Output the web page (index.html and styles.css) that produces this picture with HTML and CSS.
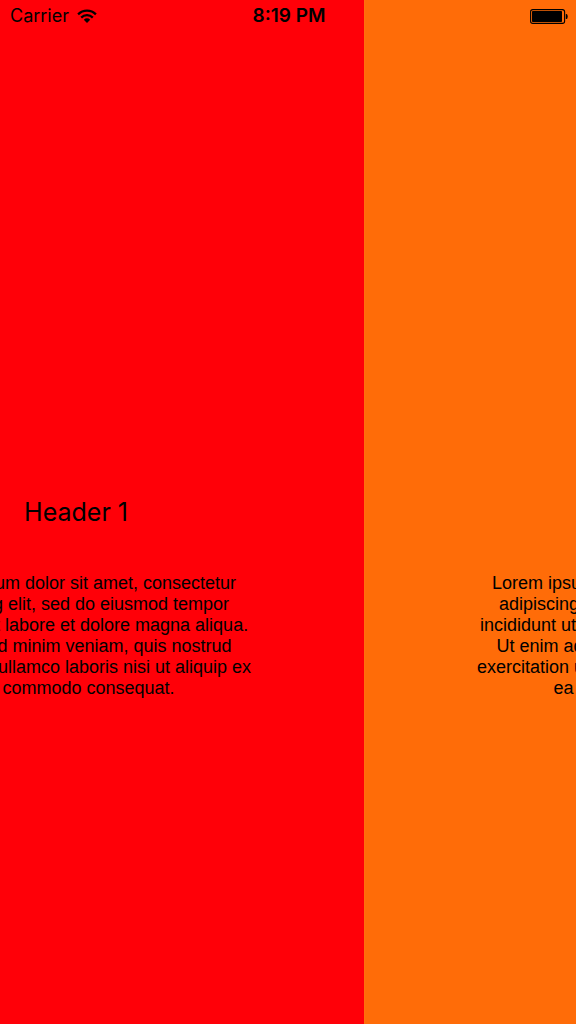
FILE: index.html
```html
<!DOCTYPE html>
<html lang="en">
<head>
<meta charset="utf-8">
<meta name="viewport" content="width=device-width, initial-scale=1">
<title>Pages</title>
<link rel="stylesheet" href="styles.css">
</head>
<body>
<header class="status">
  <div class="carrier">
    <span>Carrier</span>
    <svg class="wifi" viewBox="0 0 20 15" role="img" aria-label="Wi-Fi">
      <path d="M1.1 5.4a12.6 12.6 0 0 1 17.8 0M4.2 8.6a8.1 8.1 0 0 1 11.6 0" fill="none" stroke="currentColor" stroke-width="2.3"/>
      <path d="M6.8 10.8a4.7 4.7 0 0 1 6.4 0L10 14z" fill="currentColor"/>
    </svg>
  </div>
  <time class="time">8:19 PM</time>
  <svg class="battery" viewBox="0 0 38 15" role="img" aria-label="Battery full">
    <rect x="0.6" y="0.6" width="34" height="13.8" rx="2.2" fill="none" stroke="currentColor" stroke-width="1.1"/>
    <rect x="2" y="2" width="30" height="11" rx="0.8" fill="currentColor"/>
    <path d="M35.8 5h0.7q1.2 0 1.2 2.5t-1.2 2.5h-0.7z" fill="currentColor"/>
  </svg>
</header>
<main class="pager">
  <div class="track">
    <section class="page page-red">
      <h1 class="title">Header 1</h1>
      <p class="copy">Lorem ipsum dolor sit amet, consectetur adipiscing elit, sed do eiusmod tempor incididunt ut labore et dolore magna aliqua. Ut enim ad minim veniam, quis nostrud exercitation ullamco laboris nisi ut aliquip ex ea commodo consequat.</p>
    </section>
    <section class="page page-orange">
      <h1 class="title">Header 2</h1>
      <p class="copy">Lorem ipsum dolor sit amet, consectetur adipiscing elit, sed do eiusmod tempor incididunt ut labore et dolore magna aliqua. Ut enim ad minim veniam, quis nostrud exercitation ullamco laboris nisi ut aliquip ex ea commodo consequat.</p>
    </section>
  </div>
</main>
</body>
</html>
```
FILE: styles.css
```css
* {
  box-sizing: border-box;
}

body {
  margin: 0;
  color: #000;
  font-family: Inter, "Liberation Sans", sans-serif;
}

/* The status bar lies over the pages. */
.status {
  position: absolute;
  top: 0;
  left: 0;
  right: 0;
  z-index: 1;
  display: grid;
  grid-template-columns: 1fr auto 1fr;
  align-items: center;
  height: 32px;
  padding: 0 8px 0 10px;
  font-size: 18px;
  line-height: 32px;
}

.carrier {
  display: flex;
  align-items: center;
  gap: 8px;
}

.wifi {
  width: 20px;
  height: 15px;
}

.time {
  font-size: 19px;
  font-weight: 600;
}

.battery {
  justify-self: end;
  width: 38px;
  height: 15px;
}

.pager {
  overflow: hidden;
}

/* Part-way through the swipe from the first page to the second. */
.track {
  display: flex;
  transform: translateX(-36.8%);
}

.page {
  flex: 0 0 100%;
  display: grid;
  grid-template-rows: 1fr auto 1fr;
  justify-items: center;
  min-height: 100vh;
}

.page-red {
  background: #ff0008;
}

.page-orange {
  background: #ff6c08;
}

.title {
  grid-row: 2;
  margin: 0;
  font-size: 25px;
  font-weight: 400;
  line-height: 32px;
}

.copy {
  grid-row: 3;
  max-width: 360px;
  margin: 45px 0 0;
  font-family: "Liberation Sans", Arial, sans-serif;
  font-size: 18px;
  line-height: 21px;
  text-align: center;
}
```
